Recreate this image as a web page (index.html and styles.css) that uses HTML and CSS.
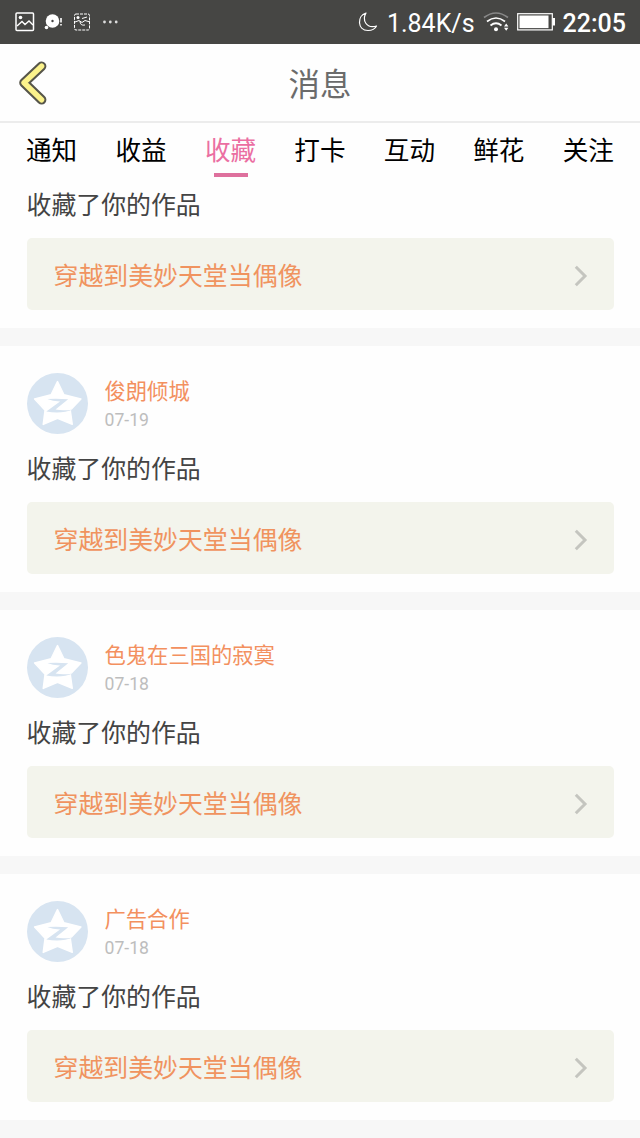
FILE: index.html
```
<!DOCTYPE html>
<html lang="zh-CN">
<head>
    <meta charset="UTF-8">
    <meta name="viewport" content="width=device-width, initial-scale=1.0">
    <title>消息</title>
    <link rel="stylesheet" href="styles.css">
</head>
<body>
    <!-- Shared icons -->
    <svg class="sprite" width="0" height="0">
        <symbol id="avatar" viewBox="0 0 60 60">
            <circle cx="30" cy="30" r="30" fill="#d7e4f1"/>
            <path d="M30 8.5 L36.3 21.5 L53 25.5 L42.5 36.5 L44.5 50.5 L30 44.5 L16 50.5 L17.8 36.5 L7.5 25.5 L23.7 21.5 Z" fill="#fff" stroke="#fff" stroke-width="1.5" stroke-linejoin="round"/>
            <path d="M20 25.5 Q30 24.8 40.5 25.8 L28 36 Q36 37.5 45 35.8 Q34 40.5 19 37.8 L32.5 28 Q25 27.8 20 25.5 Z" fill="#d7e4f1"/>
        </symbol>
        <symbol id="arrow" viewBox="0 0 14 22">
            <path d="M1.8 1.8 L11 11 L1.8 20.2" fill="none" stroke="#c4c5bf" stroke-width="3"/>
        </symbol>
    </svg>

    <!-- System status bar -->
    <div class="status-bar">
        <svg class="status-icons" width="106" height="24" viewBox="0 0 106 24" fill="none" stroke="#fff">
            <rect x="1" y="4" width="17.5" height="17.5" rx="1" stroke-width="1.5"/>
            <circle cx="5.5" cy="8.5" r="1.8" fill="#fff" stroke="none"/>
            <path d="M2 17 L7 12.5 L10 15.5 L14 12 L18 16" stroke-width="1.4"/>
            <circle cx="37.5" cy="12" r="6.8" fill="#fff" stroke="none"/>
            <circle cx="37.5" cy="12" r="1.2" fill="#444" stroke="none"/>
            <circle cx="31.5" cy="18.5" r="1.8" fill="#fff" stroke="none"/>
            <path d="M46 9 V13.5 M46 15 V16.5" stroke-width="1.6"/>
            <rect x="59.5" y="5" width="15" height="16" rx="1.5" stroke-width="1" stroke-dasharray="3 1"/>
            <circle cx="63" cy="8.5" r="1.5" fill="#fff" stroke="none"/>
            <path d="M60 13 L64 11.5 L67 13.5 L70 11.5 L75 13 M65 12 Q65 17 70 16 M67 9.5 L72 8" stroke-width="1"/>
            <g fill="#ddd" stroke="none">
                <circle cx="89.5" cy="13" r="1.4"/>
                <circle cx="95.3" cy="13" r="1.4"/>
                <circle cx="101.2" cy="13" r="1.4"/>
            </g>
        </svg>
        <div class="status-right">
            <svg class="moon" width="20" height="20" viewBox="0 0 20 20">
                <path d="M8 1 C-1 4 -1 18 10 18.5 C14 18.5 17 17 18.5 14 C8 17 4 8 8 1 Z" fill="none" stroke="#fff" stroke-width="1.2" stroke-linejoin="round"/>
            </svg>
            <span class="speed">1.84K/s</span>
            <svg class="wifi" width="27" height="20" viewBox="0 0 27 20" fill="none" stroke="#fff" stroke-width="1.7">
                <path d="M1 5.5 Q13 -3.5 25 5.5" stroke="#888"/>
                <path d="M4 9.5 Q13 2.5 22 9.5"/>
                <path d="M7.5 13.5 Q13 9 18.5 13.5"/>
                <circle cx="13" cy="17.2" r="2" fill="#fff" stroke="none"/>
                <path d="M21 14.5 L23.2 11.5 L25.4 14.5 Z M21 15.8 L23.2 18.8 L25.4 15.8 Z" fill="#fff" stroke="none"/>
            </svg>
            <svg class="battery" width="39" height="18" viewBox="0 0 39 18">
                <rect x="0.7" y="0.7" width="34.6" height="16.2" fill="none" stroke="#fff" stroke-width="1.2"/>
                <rect x="2.5" y="2.5" width="29" height="12.6" fill="#fff"/>
                <rect x="35.5" y="5" width="2.5" height="7.5" fill="#fff"/>
            </svg>
            <span class="clock">22:05</span>
        </div>
    </div>

    <header class="header">
        <svg class="back" width="30" height="46" viewBox="0 0 30 46" fill="none" stroke-linecap="round" stroke-linejoin="round">
            <path d="M23.6 6.2 L6 22.8 L23.6 39.8" stroke="#57564a" stroke-width="9.6"/>
            <path d="M23.6 6.2 L6 22.8 L23.6 39.8" stroke="#fbf28b" stroke-width="5.4"/>
        </svg>
        <h1 class="title">消息</h1>
    </header>

    <nav class="tabs">
        <span class="tab">通知</span>
        <span class="tab">收益</span>
        <span class="tab active">收藏</span>
        <span class="tab">打卡</span>
        <span class="tab">互动</span>
        <span class="tab">鲜花</span>
        <span class="tab">关注</span>
    </nav>

    <main class="list">
        <section class="card">
            <p class="message">收藏了你的作品</p>
            <div class="work">
                <span>穿越到美妙天堂当偶像</span>
                <svg class="arrow" width="14" height="22"><use href="#arrow"/></svg>
            </div>
        </section>

        <section class="card">
            <div class="user">
                <svg class="avatar" width="61" height="61"><use href="#avatar"/></svg>
                <div class="info">
                    <span class="name">俊朗倾城</span>
                    <span class="date">07-19</span>
                </div>
            </div>
            <p class="message">收藏了你的作品</p>
            <div class="work">
                <span>穿越到美妙天堂当偶像</span>
                <svg class="arrow" width="14" height="22"><use href="#arrow"/></svg>
            </div>
        </section>

        <section class="card">
            <div class="user">
                <svg class="avatar" width="61" height="61"><use href="#avatar"/></svg>
                <div class="info">
                    <span class="name">色鬼在三国的寂寞</span>
                    <span class="date">07-18</span>
                </div>
            </div>
            <p class="message">收藏了你的作品</p>
            <div class="work">
                <span>穿越到美妙天堂当偶像</span>
                <svg class="arrow" width="14" height="22"><use href="#arrow"/></svg>
            </div>
        </section>

        <section class="card">
            <div class="user">
                <svg class="avatar" width="61" height="61"><use href="#avatar"/></svg>
                <div class="info">
                    <span class="name">广告合作</span>
                    <span class="date">07-18</span>
                </div>
            </div>
            <p class="message">收藏了你的作品</p>
            <div class="work">
                <span>穿越到美妙天堂当偶像</span>
                <svg class="arrow" width="14" height="22"><use href="#arrow"/></svg>
            </div>
        </section>
    </main>
</body>
</html>
```
FILE: styles.css
```
* {
    margin: 0;
    padding: 0;
    box-sizing: border-box;
}

body {
    display: flex;
    flex-direction: column;
    height: 100vh;
    overflow: hidden;
    background: #fefefe;
    font-family: Roboto, "Noto Sans CJK SC", sans-serif;
}

svg {
    display: block;
    flex-shrink: 0;
}

.sprite {
    display: none;
}

/* Status bar */
.status-bar {
    display: flex;
    justify-content: space-between;
    align-items: center;
    flex-shrink: 0;
    height: 44px;
    padding: 0 14px 0 15px;
    background: #464644;
    color: #fff;
}

.status-icons {
    margin-bottom: 2px;
}

.status-right {
    display: flex;
    align-items: center;
    height: 44px;
}

.moon {
    margin-right: 9px;
}

.speed {
    font-size: 25px;
    line-height: 44px;
    margin-right: 8px;
    padding-top: 3px;
}

.wifi {
    margin-right: 7px;
}

.battery {
    margin-right: 7px;
}

.clock {
    font-size: 25px;
    font-weight: 500;
    line-height: 44px;
    padding-top: 3px;
}

/* Header */
.header {
    display: grid;
    grid-template-columns: 60px 1fr 60px;
    align-items: center;
    flex-shrink: 0;
    height: 79px;
    border-bottom: 2px solid #ececec;
}

.back {
    margin-left: 18px;
}

.title {
    padding-top: 6px;
    color: #6b6b6b;
    font-size: 31.5px;
    font-weight: 400;
    line-height: 46px;
    text-align: center;
}

/* Tabs */
.tabs {
    display: flex;
    justify-content: space-between;
    flex-shrink: 0;
    height: 60px;
    padding: 10px 26px 0;
}

.tab {
    display: flex;
    flex-direction: column;
    align-items: center;
    color: #000;
    font-size: 25.6px;
    line-height: 36px;
}

.tab.active {
    color: #eb6fa2;
}

.tab.active::after {
    content: '';
    width: 34px;
    height: 4px;
    margin-top: 4px;
    background: #de709d;
}

/* Message list */
.list {
    flex: 1;
    min-height: 0;
    overflow: hidden;
}

.card {
    padding: 27px 26.5px 18px;
    border-bottom: 18px solid #f7f7f7;
}

.card:first-child {
    padding-top: 0;
}

.user {
    display: flex;
    height: 60px;
}

.info {
    display: flex;
    flex-direction: column;
    padding-top: 2px;
    margin-left: 17px;
}

.name {
    color: #f3905f;
    font-size: 21.3px;
    line-height: 34px;
}

.date {
    color: #bdbdbd;
    font-size: 17.6px;
    line-height: 23px;
}

.message {
    height: 69px;
    color: #444;
    font-size: 24.9px;
    line-height: 73px;
}

.card:first-child .message {
    height: 55px;
    line-height: 45px;
}

.work {
    display: flex;
    justify-content: space-between;
    align-items: center;
    height: 72px;
    padding: 0 26px 0 27px;
    border-radius: 5px;
    background: #f3f4ec;
    color: #f0935f;
    font-size: 24.9px;
}

.arrow {
    margin-top: 3px;
}
```
